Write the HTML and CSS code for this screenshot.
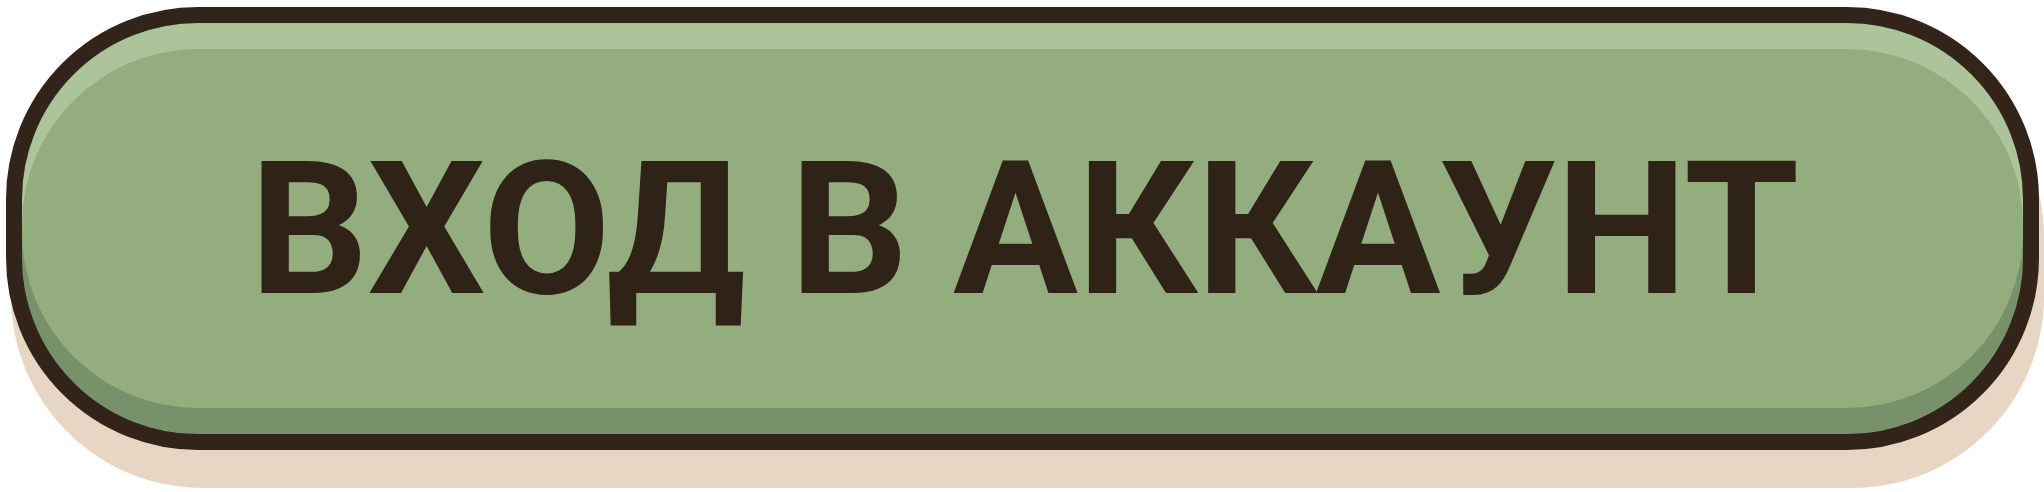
FILE: index.html
```html
<!DOCTYPE html>
<html lang="ru">
<head>
    <meta charset="UTF-8">
    <meta name="viewport" content="width=device-width, initial-scale=1.0">
    <title>Вход</title>
    <link rel="stylesheet" href="styles.css">
</head>
<body>
    <div class="wrap">
        <button class="login-btn" type="button">ВХОД В АККАУНТ</button>
    </div>
</body>
</html>
```

FILE: styles.css
```css
/* Кнопка входа */
html, body {
    margin: 0;
    background-color: #fff;
    font-family: Roboto, "Liberation Sans", sans-serif;
}
.wrap {
    box-sizing: border-box;
    height: 492px;
    padding: 7px 5px 0 6px;
}
.login-btn {
    display: flex;
    justify-content: center;
    align-items: center;
    box-sizing: border-box;
    width: 2033px;
    height: 443px;
    padding: 0 0 0 3px;
    border: 16px solid #33241a;
    border-radius: 192px;
    background-color: #93ad7e;
    color: #2f2318;
    font-family: Roboto, "Liberation Sans", sans-serif;
    font-size: 186px;
    font-weight: 700;
    letter-spacing: -0.9px;
    line-height: 1;
    cursor: pointer;
    /* светлая полоса сверху, тёмная снизу и бежевая тень */
    box-shadow:
        inset 0 26px 0 #adc49b,
        inset 0 -26px 0 #77926b,
        5px 38px 0 #e6d6c3;
}
```
